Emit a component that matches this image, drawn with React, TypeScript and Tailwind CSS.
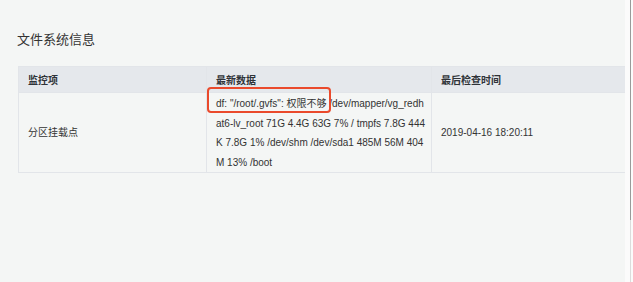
import React from 'react'

const font = { fontFamily: '"Liberation Sans", "Noto Sans CJK SC", sans-serif' }

const lines = [
  '/dev/mapper/vg_redh',
  'at6-lv_root 71G 4.4G 63G 7% / tmpfs 7.8G 444',
  'K 7.8G 1% /dev/shm /dev/sda1 485M 56M 404',
  'M 13% /boot',
]

export default function App() {
  return (
    <div className="flex h-[282px] w-[633px] overflow-hidden bg-[#f4f6f5]" style={font}>
      <main className="w-[625px] shrink-0 overflow-hidden pl-[18px] pt-[32px]">
        <h1 className="ml-[-1px] text-[13px] leading-[15px] text-[#333]">文件系统信息</h1>

        <table className="mt-[19px] w-[680px] table-fixed border-collapse text-[10px] text-[#333]">
          <colgroup>
            <col className="w-[188px]" />
            <col className="w-[225px]" />
            <col />
          </colgroup>
          <thead>
            <tr className="h-[26px] bg-[#e5e8ec] text-[#2f3338]">
              <th className="border border-[#e2e5e9] pl-[9px] pt-[1px] text-left font-bold">监控项</th>
              <th className="border border-[#e2e5e9] pl-[9px] pt-[1px] text-left font-bold">最新数据</th>
              <th className="border border-[#e2e5e9] pl-[9px] pt-[1px] text-left font-bold">最后检查时间</th>
            </tr>
          </thead>
          <tbody>
            <tr className="h-[80px]">
              <td className="border border-[#e2e5e9] pl-[9px] align-middle">分区挂载点</td>
              <td className="border border-[#e2e5e9] pl-[9px] pt-[1px] align-middle leading-[19.5px]">
                <div className="whitespace-nowrap">
                  <span className="relative">
                    df: "/root/.gvfs": 权限不够
                    <span className="absolute left-[-9px] right-[-5px] top-[-11px] bottom-[-4px] rounded-[4px] border-2 border-[#ea4a2c]" />
                  </span>{' '}
                  {lines[0]}
                </div>
                {lines.slice(1).map((l) => (
                  <div key={l} className="whitespace-nowrap">
                    {l}
                  </div>
                ))}
              </td>
              <td className="border border-[#e2e5e9] pl-[9px] align-middle">2019-04-16 18:20:11</td>
            </tr>
          </tbody>
        </table>
      </main>
      <div className="flex w-[8px] shrink-0 bg-[#fbfbfb]">
        <div className="w-[5px]" />
        <div className="flex w-[1px] flex-col">
          <div className="h-[220px] bg-[#9a9a9a]" />
          <div className="flex-1 bg-[#dcdcdc]" />
        </div>
      </div>
    </div>
  )
}
